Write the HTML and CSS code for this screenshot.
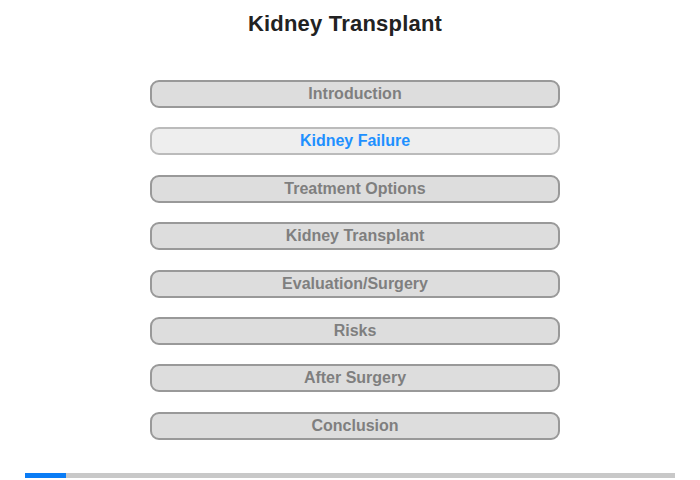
FILE: index.html
```html
<!DOCTYPE html>
<html>
<head>
<meta charset="utf-8">
<link rel="stylesheet" href="styles.css">
</head>
<body>
<div class="page">
  <h1 class="title">Kidney Transplant</h1>
  <nav class="menu">
    <div class="item">Introduction</div>
    <div class="item active">Kidney Failure</div>
    <div class="item">Treatment Options</div>
    <div class="item">Kidney Transplant</div>
    <div class="item">Evaluation/Surgery</div>
    <div class="item">Risks</div>
    <div class="item">After Surgery</div>
    <div class="item">Conclusion</div>
  </nav>
  <div class="progress"><div class="progress-fill" style="width:41px"></div></div>
</div>
</body>
</html>
```
FILE: styles.css
```css
html, body {
  margin: 0;
  padding: 0;
  background: #fff;
}
.page {
  width: 700px;
  height: 480px;
  font-family: "Liberation Sans", Arial, sans-serif;
  display: flex;
  flex-direction: column;
  align-items: center;
}
.title {
  margin: 11px 10px 0 0;
  font-size: 22px;
  line-height: 26px;
  font-weight: bold;
  letter-spacing: 0.2px;
  color: #222;
}
.menu {
  margin: 43px 0 0 10px;
  display: flex;
  flex-direction: column;
  gap: 19.4px;
}
.item {
  box-sizing: border-box;
  width: 410px;
  height: 28px;
  border: 2px solid #999;
  border-radius: 9px;
  background: #ddd;
  color: #7f7f7f;
  font-size: 16px;
  font-weight: bold;
  line-height: 24px;
  text-align: center;
}
.item.active {
  background: #eee;
  border-color: #bbb;
  color: #1e90ff;
}
.progress {
  margin-top: auto;
  margin-bottom: 2px;
  width: 650px;
  height: 5px;
  background: #c8c8c8;
}
.progress-fill {
  height: 100%;
  background: #0a7cf5;
}
```
